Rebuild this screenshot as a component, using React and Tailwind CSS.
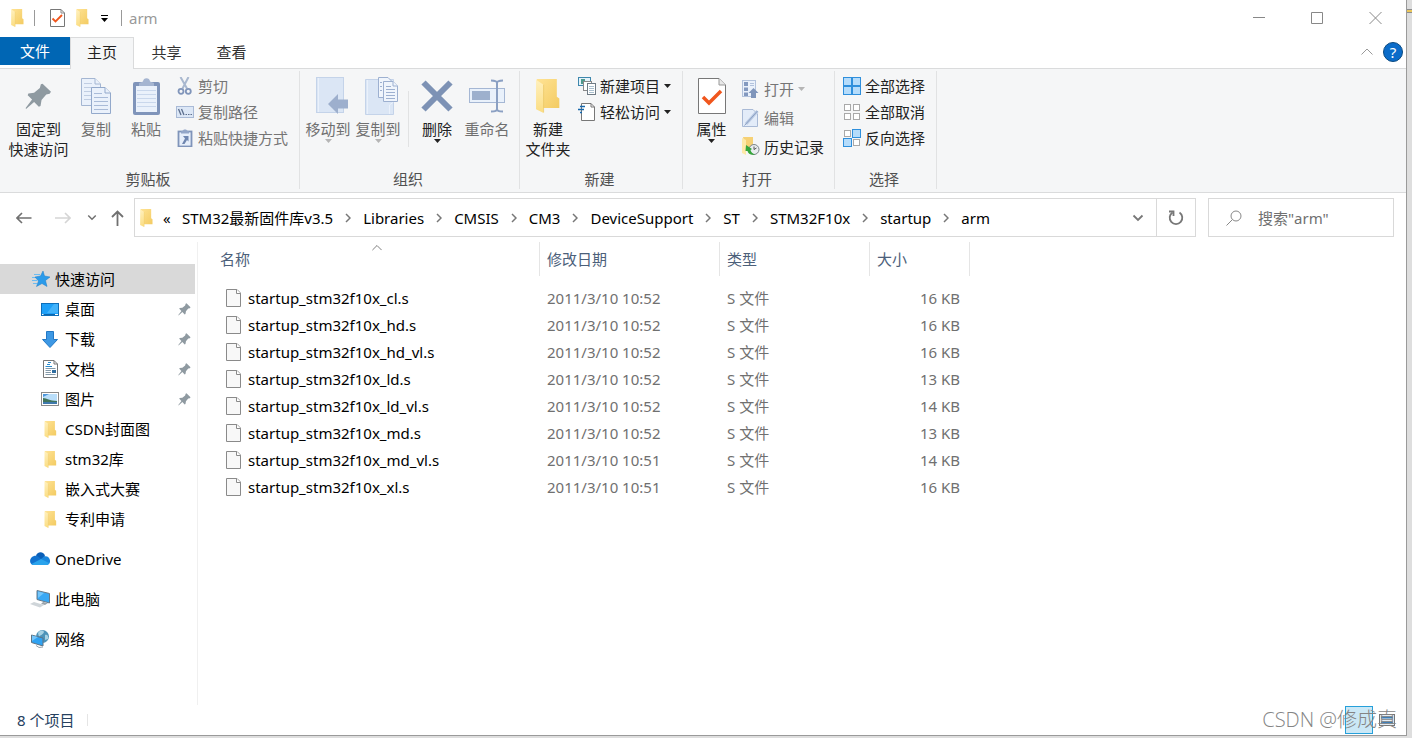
import { useState } from 'react';

const quickAccess = [
  { name: '桌面', icon: 'desktop', pinned: true },
  { name: '下载', icon: 'download', pinned: true },
  { name: '文档', icon: 'document', pinned: true },
  { name: '图片', icon: 'picture', pinned: true },
  { name: 'CSDN封面图', icon: 'folder' },
  { name: 'stm32库', icon: 'folder' },
  { name: '嵌入式大赛', icon: 'folder' },
  { name: '专利申请', icon: 'folder' },
];

const files = [
  { name: 'startup_stm32f10x_cl.s', date: '2011/3/10 10:52', size: '16 KB' },
  { name: 'startup_stm32f10x_hd.s', date: '2011/3/10 10:52', size: '16 KB' },
  { name: 'startup_stm32f10x_hd_vl.s', date: '2011/3/10 10:52', size: '16 KB' },
  { name: 'startup_stm32f10x_ld.s', date: '2011/3/10 10:52', size: '13 KB' },
  { name: 'startup_stm32f10x_ld_vl.s', date: '2011/3/10 10:52', size: '14 KB' },
  { name: 'startup_stm32f10x_md.s', date: '2011/3/10 10:52', size: '13 KB' },
  { name: 'startup_stm32f10x_md_vl.s', date: '2011/3/10 10:51', size: '14 KB' },
  { name: 'startup_stm32f10x_xl.s', date: '2011/3/10 10:51', size: '16 KB' },
];

const path = ['STM32最新固件库v3.5', 'Libraries', 'CMSIS', 'CM3', 'DeviceSupport', 'ST', 'STM32F10x', 'startup', 'arm'];

// ---------- icons ----------

const Folder = ({ className = 'w-[13px] h-[18px]' }) => (
  <svg className={className} viewBox="0 0 38 54" aria-hidden="true">
    <defs>
      <linearGradient id="folderBack" x1="0" y1="0" x2="1" y2="1">
        <stop offset="0" stopColor="#ffe394" />
        <stop offset="1" stopColor="#f3cb62" />
      </linearGradient>
      <linearGradient id="folderFront" x1="0" y1="0" x2="0" y2="1">
        <stop offset="0" stopColor="#fff0bd" />
        <stop offset="1" stopColor="#fbdd82" />
      </linearGradient>
    </defs>
    <path d="M1 0H33V28L37 31V46H10Z" fill="url(#folderBack)" />
    <path d="M0 1L12 9V54L0 48Z" fill="url(#folderFront)" />
    <path d="M12 9V53" stroke="#e9c25c" strokeWidth="1" />
  </svg>
);

const Pin = ({ className }) => (
  <svg className={className} viewBox="78 248 80 80" aria-hidden="true">
    <path d="M130 250L155 274L151 280L141 282L127 298L124 316L119 318L105 304L81 325L80 322L99 297L86 284L88 279L105 277L122 263L125 252Z" fill="#8f9aa1" />
  </svg>
);

const Copy = () => (
  <svg className="w-8 h-9" viewBox="0 0 32 36" fill="#eaf1fb" stroke="#a4b6d2" aria-hidden="true">
    <path d="M1.500 .5H15L20.500 6V27.500H1.500Z" />
    <path d="M15 .5V6H20.500" />
    <path d="M4 5.500H12M4 9.500H17M4 13.500H17M4 17.500H17M4 21.500H11" stroke="#c0cde2" />
    <path d="M11.500 9.500H25L30.500 15V35.500H11.500Z" stroke="#93a9cb" />
    <path d="M25 9.500V15H30.500" stroke="#93a9cb" />
    <path d="M14 15.500H22M14 19.500H28M14 23.500H28M14 27.500H28M14 31.500H28" stroke="#a9bbd8" />
  </svg>
);

const Clipboard = () => (
  <svg className="w-[27px] h-[37px]" viewBox="0 0 27 37" aria-hidden="true">
    <rect x="0" y="4" width="27" height="33" rx="2" fill="#7f94ba" />
    <rect x="3" y="8" width="21" height="26" fill="#eaf1fb" />
    <path d="M4 12.500H23M4 16.500H23M4 20.500H23M4 24.500H23M4 28.500H23" stroke="#c9d7ec" />
    <path d="M6 8V5L10 3.500C10-1 17-1 17 3.500L21 5V8Z" fill="#a5b5d1" />
  </svg>
);

const Scissors = () => (
  <svg className="w-[18px] h-[18px]" viewBox="0 0 18 18" fill="none" aria-hidden="true">
    <path d="M4.500 0L11 11.500M12.500 0L6.500 11.500" stroke="#a9b8cf" strokeWidth="2" />
    <circle cx="5" cy="14.300" r="2.500" stroke="#8095ba" strokeWidth="1.800" />
    <circle cx="12.300" cy="14.300" r="2.500" stroke="#8095ba" strokeWidth="1.800" />
  </svg>
);

const CopyPath = () => (
  <svg className="w-[18px] h-3" viewBox="0 0 18 12" aria-hidden="true">
    <rect x=".5" y=".5" width="17" height="11" fill="#dce7f6" stroke="#a9bad6" />
    <path d="M2.500 3L5 9M5.500 3L8 9" stroke="#5d6f8e" strokeWidth="1.300" />
    <path d="M9.500 8.500H11M12 8.500H13.500M14.500 8.500H16" stroke="#5d6f8e" />
  </svg>
);

const PasteLink = () => (
  <svg className="w-[18px] h-[18px]" viewBox="0 0 18 18" aria-hidden="true">
    <rect x="2.500" y="2.500" width="13" height="15" fill="#e6eefa" stroke="#7f94ba" strokeWidth="1.800" />
    <path d="M5 4.500V2.500L7 1.500C7 0 11 0 11 1.500L13 2.500V4.500Z" fill="#93a6c8" />
    <path d="M7 7H12.500V12.500L11 11L8.500 15H6L9 9.500Z" fill="#6f86b0" />
  </svg>
);

const MoveTo = () => (
  <svg className="w-11 h-[38px]" viewBox="-8 0 44 38" aria-hidden="true">
    <rect x="2.500" y=".5" width="27" height="35" fill="#dbe6f5" stroke="#c4d3e9" />
    <path d="M4.500 1V35" stroke="#eaf1fb" />
    <path d="M14 27L24 17V22.500H34V31.500H24V37Z" fill="#9dafcd" />
  </svg>
);

const CopyTo = () => (
  <svg className="w-11 h-10" viewBox="-8 0 44 40" aria-hidden="true">
    <path d="M1.500 3.500H29.500V38.500H1.500Z" fill="#dbe6f5" stroke="#c4d3e9" />
    <path d="M3.500 4V38M25.500 38V29L29.500 26" stroke="#eaf1fb" fill="none" />
    <g fill="#f0f5fc" stroke="#9db0d0">
      <path d="M14.500 1.500H24L28.500 6V21.500H14.500Z" />
      <path d="M19.500 5.500H29L33.500 10V25.500H19.500Z" />
      <path d="M29 5.500V10H33.500M16 6.500H18M16 10.500H18M16 14.500H18M22 10.500H27M22 13.500H31M22 16.500H31M22 19.500H31M22 22.500H31" />
    </g>
  </svg>
);

const Delete = () => (
  <svg className="w-8 h-8" viewBox="0 0 32 32" aria-hidden="true">
    <path d="M2.500 2.500L29.500 29.500M29.500 2.500L2.500 29.500" stroke="#7d92b5" strokeWidth="6" />
  </svg>
);

const Rename = () => (
  <svg className="w-9 h-[34px]" viewBox="0 0 36 34" fill="none" aria-hidden="true">
    <rect x=".5" y="9.500" width="35" height="14" fill="#e9f1fb" stroke="#a5b7d4" />
    <rect x="3" y="12" width="18" height="9" fill="#9db0cd" />
    <path d="M28 3V31M22 1.500C25 1.500 28 2 28 4C28 2 31 1.500 34 1.500M22 32.500C25 32.500 28 32 28 30C28 32 31 32.500 34 32.500" stroke="#8ba0c3" strokeWidth="2" />
  </svg>
);

const NewItem = () => (
  <svg className="w-[18px] h-[18px]" viewBox="0 0 18 18" aria-hidden="true">
    <rect x=".5" y=".5" width="12" height="8" fill="#e4f2fa" stroke="#3d87ad" />
    <rect x="3" y="2" width="4" height="5" fill="#4f9a8d" />
    <rect x="5.500" y="4.500" width="8" height="9" fill="#fff" stroke="#8a8a8a" />
    <rect x="9.500" y="6.500" width="8" height="11" fill="#fff" stroke="#6f7b85" />
    <path d="M11 9.500H16M11 11.500H16M11 13.500H16M11 15.500H16" stroke="#a9bfce" />
  </svg>
);

const EasyAccess = () => (
  <svg className="w-[18px] h-[18px]" viewBox="0 0 18 18" aria-hidden="true">
    <path d="M3.500 .5H13L16.500 4V17.500H3.500Z" fill="#fff" stroke="#777" />
    <path d="M13 .5V4H16.500" fill="none" stroke="#777" />
    <path d="M2 3.500H7M0 6.500H6M2 9.500H4" stroke="#1768ad" strokeWidth="1.300" />
  </svg>
);

const Properties = ({ className = 'w-[28px] h-9' }) => (
  <svg className={className} viewBox="0 0 28 36" aria-hidden="true">
    <path d="M.5 .5H21L27.500 7V35.500H.5Z" fill="#fff" stroke="#777" />
    <path d="M21 .5V7H27.500" fill="#e8e8e8" stroke="#999" />
    <path d="M5 19L11 25L23 13" fill="none" stroke="#f0561d" strokeWidth="3.500" />
  </svg>
);

const PropertiesSmall = () => (
  <svg className="w-[15px] h-[18px]" viewBox="0 0 15 18" aria-hidden="true">
    <path d="M.5 .5H11L14.500 4V17.500H.5Z" fill="#fff" stroke="#777" />
    <path d="M11 .5V4H14.500" fill="none" stroke="#888" />
    <path d="M2.500 9.500L5.500 12.500L12 6" fill="none" stroke="#f0561d" strokeWidth="1.800" />
  </svg>
);

const Open = () => (
  <svg className="w-[18px] h-[18px]" viewBox="0 0 18 18" aria-hidden="true">
    <rect x=".5" y=".5" width="13" height="16" fill="#eaf1fb" stroke="#b2c2dc" />
    <path d="M2 2H6V6H2ZM2 7.500H6V11H2ZM2 12.500H6V16H2Z" fill="#8399bf" />
    <path d="M8 3.500H12M8 5.500H12" stroke="#b2c2dc" />
    <path d="M11.500 8L16.500 13H14V18H9V13H6.500Z" fill="#7f95bb" />
  </svg>
);

const Edit = () => (
  <svg className="w-[18px] h-[18px]" viewBox="0 0 18 18" aria-hidden="true">
    <path d="M.5 .5H11L15.500 5V17.500H.5Z" fill="#e3ecf9" stroke="#a9bad6" />
    <path d="M4 15L15.500 2" stroke="#b9c9e2" strokeWidth="3" />
    <path d="M2.500 16.500L15.500 2" stroke="#8ba0c3" />
  </svg>
);

const History = () => (
  <svg className="w-[18px] h-[19px]" viewBox="0 0 18 19" aria-hidden="true">
    <path d="M1 0H11V14H4Z" fill="#f6d175" />
    <path d="M0 1L4 3V18L0 16Z" fill="#fde9a8" />
    <circle cx="12" cy="12.500" r="5" fill="#e9edf0" stroke="#7c858b" />
    <path d="M12 9.500V12.500L14.500 11" stroke="#555" fill="none" />
    <path d="M4 8L10 12L8.500 13C9 15 10.500 16.500 13 17.500C9 18.500 6 16.500 5.500 14H3.500Z" fill="#35a53a" />
  </svg>
);

// four squares; `on` tells which of them are filled
const Squares = ({ on }) => (
  <svg className="w-[18px] h-[18px]" viewBox="0 0 18 18" aria-hidden="true">
    {[[1, 1], [10, 1], [1, 10], [10, 10]].map(([x, y], i) => on[i] ? (
      <rect key={i} x={x - 0.5} y={y - 0.5} width="8" height="8" fill="#b5dcfb" stroke="#2f8fdc" />
    ) : (
      <rect key={i} x={x + 0.5} y={y + 0.5} width="6" height="6" fill="#fff" stroke="#a9a9a9" />
    ))}
  </svg>
);

const Caret = ({ className = 'text-[#222]' }) => (
  <svg className={`w-[7px] h-1 shrink-0 ${className}`} viewBox="0 0 7 4" aria-hidden="true">
    <path d="M0 0H7L3.500 4Z" fill="currentColor" />
  </svg>
);

const Chevron = ({ className = '', d = 'M1 1L5 5L1 9' }) => (
  <svg className={className} viewBox="0 0 6 10" fill="none" stroke="currentColor" strokeWidth="1.500" aria-hidden="true">
    <path d={d} />
  </svg>
);

const ChevronDown = ({ className }) => (
  <svg className={className} viewBox="0 0 12 8" fill="none" stroke="currentColor" strokeWidth="1.800" aria-hidden="true">
    <path d="M1.500 1.500L6 6L10.500 1.500" />
  </svg>
);

const ChevronUp = ({ className }) => (
  <svg className={className} viewBox="0 0 12 8" fill="none" stroke="currentColor" aria-hidden="true">
    <path d="M.5 6.500L6 1L11.500 6.500" />
  </svg>
);

const FileIcon = () => (
  <svg className="w-[15px] h-[18px]" viewBox="0 0 15 18" aria-hidden="true">
    <path d="M.5 .5H11L14.500 4V17.500H.5Z" fill="#f8f8f8" stroke="#8a8a8a" />
    <path d="M10.500 .5V4.500H14.500" fill="#fff" stroke="#8a8a8a" />
  </svg>
);

const StarIcon = () => (
  <svg className="w-[18px] h-4" viewBox="0 0 18 16" aria-hidden="true">
    <path d="M2 3.500H8M0 6.500H5M0 9.500H5M1 12.500H5" stroke="#6cbcf2" />
    <path d="M11 0L12.500 5L18 6L13.500 9.500L15 15.500L10 12.500L4.500 15.500L6.500 10L3 6L8.500 5Z" fill="#2b9bea" stroke="#1c7fcb" strokeWidth=".5" />
  </svg>
);

const itemIcons = {
  folder: <Folder className="w-[13px] h-[17px]" />,
  desktop: (
    <svg className="w-[18px] h-[13px]" viewBox="0 0 18 13" aria-hidden="true">
      <rect x=".5" y=".5" width="17" height="12" fill="#1ea0f8" stroke="#0e6fba" />
      <path d="M6 10L13 1H17V10Z" fill="#43b3fb" />
      <path d="M1 11.500H17" stroke="#0b66ad" />
      <path d="M1 11.500H2.500M14 11.500H17" stroke="#fff" />
    </svg>
  ),
  download: (
    <svg className="w-4 h-[17px]" viewBox="0 0 16 17" aria-hidden="true">
      <path d="M4.500 .5H11.500V8.500H15.500L8 16.500L.5 8.500H4.500Z" fill="#3d98e4" stroke="#2378c4" />
    </svg>
  ),
  document: (
    <svg className="w-[15px] h-[18px]" viewBox="0 0 15 18" aria-hidden="true">
      <path d="M.5 .5H11L14.500 4V17.500H.5Z" fill="#fff" stroke="#777" />
      <path d="M11 .5V4H14.500" fill="none" stroke="#777" />
      <path d="M5 2.500H8M4 4.500H7M2.500 6.500H9" stroke="#2c8ccd" />
      <path d="M2.500 8.500H12.500M2.500 10.500H8M2.500 12.500H8M2.500 14.500H12.500" stroke="#8499a8" />
      <rect x="9" y="10" width="4" height="3" fill="#2f6da0" />
    </svg>
  ),
  picture: (
    <svg className="w-[18px] h-[14px]" viewBox="0 0 18 14" aria-hidden="true">
      <rect x=".5" y=".5" width="17" height="13" fill="#fff" stroke="#8a8a8a" />
      <rect x="2" y="2" width="14" height="10" fill="#b9defa" />
      <path d="M2 2H8L2 5Z" fill="#4c97dc" />
      <path d="M2 6C6 6 8 9 16 9V10H2Z" fill="#41745c" />
      <path d="M2 10H16V12H2Z" fill="#3f79ad" />
    </svg>
  ),
};

const OneDrive = () => (
  <svg className="w-5 h-[14px]" viewBox="0 0 20 14" aria-hidden="true">
    <path d="M6 4C7-1 14-1 15 4L12 9L4 7Z" fill="#0a5fb8" />
    <path d="M4 13C-1.500 13-1 5 4 4C7 3 9 5 11 7L5 13Z" fill="#1172cf" />
    <path d="M14 4.500C21 3 22 13 16.500 13H6L11 7Z" fill="#1a86dc" />
    <path d="M1.500 12L11 7L19 11C18.500 12.500 17.500 13 16 13H4C3 13 2 12.600 1.500 12Z" fill="#2aa3ec" />
  </svg>
);

const Computer = () => (
  <svg className="w-5 h-[18px]" viewBox="0 0 20 18" aria-hidden="true">
    <path d="M7 .5L19.500 3.500V13L7 9.500Z" fill="#39a8f4" stroke="#6a7a88" />
    <path d="M8 1.500L14 3L8 8Z" fill="#74c6fb" />
    <path d="M13 12L11 14L15 15L18 13Z" fill="#9aa4ac" />
    <path d="M0 14L4 12L14 15L10 17.500Z" fill="#cfd5d9" />
  </svg>
);

const Network = () => (
  <svg className="w-[18px] h-[18px]" viewBox="0 0 18 18" aria-hidden="true">
    <circle cx="11.500" cy="6.500" r="6.500" fill="#4d93b8" />
    <path d="M7 3C9 0 12 0 13 2C12 5 9 5 8 7ZM14 5C16 4 18 6 17 9L14 10Z" fill="#a7d2e4" />
    <path d="M.5 5L12 8V16L.5 12.500Z" fill="#2fa2f2" stroke="#5e7384" />
    <path d="M1 5.500L7 7L1 11Z" fill="#74c6fb" />
    <path d="M5 15.500L8 17.500L12 17" stroke="#9aa4ac" fill="none" />
  </svg>
);

// ---------- ribbon parts ----------

const Group = ({ label, className, children }) => (
  <section aria-label={label} className={`flex flex-col justify-between border-r border-[#e1e2e3] shrink-0 ${className}`}>
    <div className="flex">{children}</div>
    <p className="pr-[3px] text-center leading-5 text-[#505050]">{label}</p>
  </section>
);

const BigButton = ({ icon, lines, disabled, caret, className = 'w-[50px]' }) => (
  <button disabled={disabled} className={`flex flex-col items-center pt-0.5 shrink-0 text-[#222] disabled:text-[#707070] ${className}`}>
    <span className="flex h-[46px] items-center justify-center">{icon}</span>
    {lines.map(line => <span key={line} className="leading-5 whitespace-nowrap">{line}</span>)}
    {caret && <Caret className={disabled ? 'text-[#b5b5b5]' : 'text-[#222]'} />}
  </button>
);

const SmallButton = ({ icon, label, disabled, caret, className = 'h-[26px]' }) => (
  <button disabled={disabled} className={`flex items-center gap-1 whitespace-nowrap text-[#222] disabled:text-[#757575] ${className}`}>
    <span className="flex w-[18px] justify-center">{icon}</span>
    <span>{label}</span>
    {caret && <Caret className={disabled ? 'text-[#b5b5b5]' : 'text-[#222]'} />}
  </button>
);

const Ribbon = () => (
  <div className="flex h-[124px] shrink-0 border-b border-[#dadbdc] bg-[#f5f6f7] pt-0.5 pb-[3px]">
    <Group label="剪贴板" className="w-[300px]">
      <BigButton icon={<Pin className="w-[27px] h-[27px]" />} lines={['固定到', '快速访问']} className="ml-1.5 w-[65px]" />
      <BigButton icon={<Copy />} lines={['复制']} disabled />
      <BigButton icon={<Clipboard />} lines={['粘贴']} disabled />
      <div className="flex flex-col pl-[5px] pt-0.5">
        <SmallButton icon={<Scissors />} label="剪切" disabled />
        <SmallButton icon={<CopyPath />} label="复制路径" disabled />
        <SmallButton icon={<PasteLink />} label="粘贴快捷方式" disabled />
      </div>
    </Group>
    <Group label="组织" className="w-[220px]">
      <BigButton icon={<MoveTo />} lines={['移动到']} disabled caret className="ml-[3px] w-[50px]" />
      <BigButton icon={<CopyTo />} lines={['复制到']} disabled caret />
      <span className="mt-5 mr-[3px] ml-[5px] h-14 w-px bg-[#e1e2e3]" />
      <BigButton icon={<Delete />} lines={['删除']} caret />
      <BigButton icon={<Rename />} lines={['重命名']} disabled />
    </Group>
    <Group label="新建" className="w-[163px]">
      <BigButton icon={<Folder className="w-6 h-[34px]" />} lines={['新建', '文件夹']} className="w-14" />
      <div className="flex flex-col pl-0.5 pt-0.5">
        <SmallButton icon={<NewItem />} label="新建项目" caret />
        <SmallButton icon={<EasyAccess />} label="轻松访问" caret />
      </div>
    </Group>
    <Group label="打开" className="w-[152px]">
      <BigButton icon={<Properties />} lines={['属性']} caret className="w-[57px]" />
      <div className="flex flex-col pl-0.5 pt-[3px]">
        <SmallButton icon={<Open />} label="打开" disabled caret className="h-[29px]" />
        <SmallButton icon={<Edit />} label="编辑" disabled className="h-[29px]" />
        <SmallButton icon={<History />} label="历史记录" className="h-[29px]" />
      </div>
    </Group>
    <Group label="选择" className="w-[102px]">
      <div className="flex flex-col pl-2 pt-0.5">
        <SmallButton icon={<Squares on={[1, 1, 1, 1]} />} label="全部选择" />
        <SmallButton icon={<Squares on={[0, 0, 0, 0]} />} label="全部取消" />
        <SmallButton icon={<Squares on={[0, 1, 1, 0]} />} label="反向选择" />
      </div>
    </Group>
  </div>
);

const TitleBar = () => (
  <header className="flex h-[37px] shrink-0 items-center pb-0.5 pl-[11px]">
    <Folder />
    <span className="ml-2.5 h-4 w-px bg-[#999]" />
    <button aria-label="属性" className="ml-[15px]"><PropertiesSmall /></button>
    <button aria-label="新建文件夹" className="ml-[11px]"><Folder /></button>
    <button aria-label="自定义快速访问工具栏" className="ml-3 flex flex-col items-center gap-0.5 pt-0.5">
      <span className="h-px w-[7px] bg-black" />
      <Caret className="text-black" />
    </button>
    <span className="ml-[13px] h-4 w-px bg-[#999]" />
    <h1 className="ml-[7px] flex-1 leading-5 text-[#999]">arm</h1>
    <div className="flex items-center gap-[46px] pr-6 text-[#888]">
      <button aria-label="最小化">
        <svg className="w-3 h-3" viewBox="0 0 12 12" stroke="currentColor"><path d="M0 5.500H12" /></svg>
      </button>
      <button aria-label="最大化">
        <svg className="w-3 h-3" viewBox="0 0 12 12" fill="none" stroke="currentColor"><path d="M.5 .5H11.500V11.500H.5Z" /></svg>
      </button>
      <button aria-label="关闭">
        <svg className="w-[13px] h-3" viewBox="0 0 13 12" stroke="currentColor"><path d="M.5 0L12.500 12M12.500 0L.5 12" /></svg>
      </button>
    </div>
  </header>
);

const tabClass = 'w-[65px] pb-0.5 text-[#333]';

const TabBar = () => (
  <nav className="flex h-8 shrink-0 border-b border-[#dadbdc]">
    <button className="h-7 w-[70px] bg-[#0066b4] text-white">文件</button>
    <button className="-mb-px w-16 border border-b-0 border-[#dadbdc] bg-[#f5f6f7] pb-1 text-[#222]">主页</button>
    <button className={tabClass}>共享</button>
    <button className={tabClass}>查看</button>
    <div className="ml-auto flex items-center gap-2.5 pr-[3px] pb-0.5">
      <button aria-label="最小化功能区"><ChevronUp className="w-3 h-2 text-[#999]" /></button>
      <button aria-label="帮助" className="flex h-5 w-5 items-center justify-center rounded-full border border-[#0b4a80] bg-[#0b6cc9] text-[15px] leading-5 text-white">?</button>
    </div>
  </nav>
);

const AddressBar = ({ query, setQuery }) => (
  <div className="flex h-[49px] shrink-0 items-center pr-3 pl-4 text-[#707070]">
    <button aria-label="后退">
      <svg className="w-4 h-3" viewBox="0 0 16 12" fill="none" stroke="currentColor" strokeWidth="1.600"><path d="M15.500 6H1M6 1L1 6L6 11" /></svg>
    </button>
    <button aria-label="前进" disabled className="ml-[23px] text-[#d5d5d5]">
      <svg className="w-4 h-3" viewBox="0 0 16 12" fill="none" stroke="currentColor" strokeWidth="1.600"><path d="M0 6H15M10 1L15 6L10 11" /></svg>
    </button>
    <button aria-label="最近浏览的位置" className="ml-4"><ChevronDown className="w-[10px] h-[7px]" /></button>
    <button aria-label="上移" className="ml-[14px]">
      <svg className="w-[13px] h-4" viewBox="0 0 13 16" fill="none" stroke="currentColor" strokeWidth="1.800"><path d="M6.500 16V1.500M1 7L6.500 1.500L12 7" /></svg>
    </button>
    <div className="ml-2.5 flex h-[39px] min-w-0 flex-1 items-center border border-[#d9d9d9] pl-[5px] text-black">
      <Folder />
      <span className="ml-2.5 w-[19px] leading-5">«</span>
      <div className="flex flex-1 items-center whitespace-nowrap">
        {path.map((name, i) => (
          <span key={name} className="flex items-center">
            {i > 0 && <Chevron className="mx-3 h-[10px] w-[6px] text-[#777]" />}
            <a href="#" className="leading-5">{name}</a>
          </span>
        ))}
      </div>
      <button aria-label="以前的位置" className="mr-3"><ChevronDown className="w-3 h-2 text-[#777]" /></button>
      <button aria-label="刷新" className="flex h-full w-[39px] items-center justify-center border-l border-[#d9d9d9] text-[#777]">
        <svg className="w-4 h-4" viewBox="0 0 16 16" fill="none" stroke="currentColor" strokeWidth="1.800">
          <path d="M11.500 2.500A6.300 6.300 0 1 1 4.500 2.500" />
          <path d="M1 1.500H5.500V6" />
        </svg>
      </button>
    </div>
    <label className="ml-3 flex h-[39px] w-[186px] shrink-0 items-center border border-[#d9d9d9] pl-[17px]">
      <svg className="w-4 h-4 shrink-0" viewBox="0 0 16 16" fill="none" stroke="#888" aria-hidden="true">
        <circle cx="10" cy="6" r="5" />
        <path d="M6.500 9.500L.5 15.500" />
      </svg>
      <input
        aria-label="搜索"
        value={query}
        onChange={e => setQuery(e.target.value)}
        placeholder={'搜索"arm"'}
        className="ml-4 w-full min-w-0 bg-transparent outline-none placeholder:text-[#707070]"
      />
    </label>
  </div>
);

const rootItem = 'flex h-[30px] items-center text-black';

const Sidebar = () => (
  <aside className="w-[198px] shrink-0 border-r border-[#f0f0f0] pr-0.5 pt-[22px]">
    <a href="#" className={`${rootItem} bg-[#d9d9d9] pl-8`}>
      <StarIcon /><span className="ml-[5px]">快速访问</span>
    </a>
    <ul>
      {quickAccess.map(item => (
        <li key={item.name}>
          <a href="#" className="flex h-[30px] items-center pr-1 pl-10 text-black">
            <span className="flex w-5 justify-center">{itemIcons[item.icon]}</span>
            <span className="ml-[5px] flex-1">{item.name}</span>
            {item.pinned && <Pin className="w-[13px] h-[13px]" />}
          </a>
        </li>
      ))}
    </ul>
    <a href="#" className={`${rootItem} mt-2.5 pl-[30px]`}><OneDrive /><span className="ml-[5px]">OneDrive</span></a>
    <a href="#" className={`${rootItem} mt-2.5 pl-[30px]`}><Computer /><span className="ml-[5px]">此电脑</span></a>
    <a href="#" className={`${rootItem} mt-2.5 pl-[30px]`}>
      <span className="flex w-5 justify-center"><Network /></span><span className="ml-[5px]">网络</span>
    </a>
  </aside>
);

const headCell = 'flex h-[34px] items-center border-r border-[#e5e5e5] px-[7px] text-[#4c607a]';

const FileTable = ({ rows }) => (
  <main className="flex-1 pl-[15px]">
    <table className="w-[757px] table-fixed text-left">
      <thead>
        <tr className="h-[42px] align-top font-normal">
          <th className="relative w-[327px] font-normal">
            <ChevronUp className="absolute top-0.5 left-1/2 h-2 w-[10px] -translate-x-1/2 text-[#666]" />
            <div className={headCell}>名称</div>
          </th>
          <th className="w-[180px] font-normal"><div className={headCell}>修改日期</div></th>
          <th className="w-[150px] font-normal"><div className={headCell}>类型</div></th>
          <th className="w-[100px] font-normal"><div className={headCell}>大小</div></th>
        </tr>
      </thead>
      <tbody>
        {rows.map(file => (
          <tr key={file.name} className="h-[27px] text-[#707070]">
            <td className="pl-[13px]">
              <span className="flex items-center gap-[7px] text-black"><FileIcon />{file.name}</span>
            </td>
            <td className="px-[7px]">{file.date}</td>
            <td className="px-[7px]">S 文件</td>
            <td className="pr-2.5 text-right">{file.size}</td>
          </tr>
        ))}
      </tbody>
    </table>
  </main>
);

const Watermark = () => (
  <div className="absolute right-[15px] bottom-1 flex h-[29px] items-center whitespace-nowrap font-['Open_Sans','Noto_Sans_CJK_SC',sans-serif] text-[20px] leading-7 font-light text-[#858585]">
    <span className="absolute right-6 bottom-0 h-7 w-7 border border-[#26a0da] bg-[#cbe8f6]" />
    <svg className="absolute right-0.5 bottom-2 h-3 w-4" viewBox="0 0 16 12" aria-hidden="true">
      <rect x=".5" y=".5" width="15" height="11" fill="#e6eef5" stroke="#777" />
      <path d="M2 3.500H14M2 8.500H14" stroke="#3e7fb8" strokeWidth="2" />
    </svg>
    <span className="relative">CSDN @修成真</span>
  </div>
);

const App = () => {
  const [query, setQuery] = useState('');
  const rows = files.filter(f => f.name.includes(query));

  return (
    <div className="relative flex min-h-screen flex-col bg-[#dedede] pr-[5px] pb-0.5 font-['Noto_Sans','Noto_Sans_CJK_SC',sans-serif] text-[15px] leading-5">
      <div className="flex flex-1 flex-col border-r border-b border-[#9a9a9a] bg-white">
        <TitleBar />
        <TabBar />
        <Ribbon />
        <AddressBar query={query} setQuery={setQuery} />
        <div className="flex flex-1">
          <Sidebar />
          <FileTable rows={rows} />
        </div>
        <footer className="flex h-[30px] shrink-0 items-center pl-[17px] text-[#26415f]">
          <span>{rows.length} 个项目</span>
          <span className="ml-3 h-3 w-px bg-[#e5e5e5]" />
        </footer>
      </div>
      {/* sliver of the window behind */}
      <span className="absolute top-[9px] right-0 h-1 w-[5px] border-y border-[#8d8d8d] bg-[#ecc85c]" />
      <Watermark />
    </div>
  );
};

export default App;
